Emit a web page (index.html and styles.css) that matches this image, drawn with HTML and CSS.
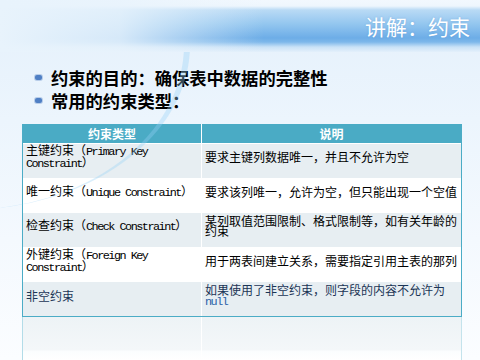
FILE: index.html
```html
<!DOCTYPE html>
<html lang="zh-CN">
<head>
<meta charset="utf-8">
<title>讲解：约束</title>
<link rel="stylesheet" href="styles.css">
</head>
<body>
<div class="slide">
  <div class="swoosh"></div>
  <header class="banner">
    <h1 class="title">讲解：约束</h1>
  </header>
  <ul class="points">
    <li>约束的目的：确保表中数据的完整性</li>
    <li>常用的约束类型：</li>
  </ul>
  <div class="table-wrap">
    <div class="grid">
      <div class="hd">约束类型</div>
      <div class="hd">说明</div>

      <div class="cell odd"><p>主键约束（<span class="en">Primary Key Constraint</span>）</p></div>
      <div class="cell odd"><p>要求主键列数据唯一，并且不允许为空</p></div>

      <div class="cell even"><p>唯一约束（<span class="en">Unique Constraint</span>）</p></div>
      <div class="cell even"><p>要求该列唯一，允许为空，但只能出现一个空值</p></div>

      <div class="cell odd"><p>检查约束（<span class="en">Check Constraint</span>）</p></div>
      <div class="cell odd"><p>某列取值范围限制、格式限制等，如有关年龄的约束</p></div>

      <div class="cell even"><p>外键约束（<span class="en">Foreign Key Constraint</span>）</p></div>
      <div class="cell even"><p>用于两表间建立关系，需要指定引用主表的那列</p></div>

      <div class="cell odd last"><p>非空约束</p></div>
      <div class="cell odd last"><p>如果使用了非空约束，则字段的内容不允许为<span class="en null">null</span></p></div>
    </div>
    <div class="reflection">
      <div class="rc"></div>
      <div class="rc"></div>
    </div>
  </div>
</div>
</body>
</html>
```

FILE: styles.css
```css
* { box-sizing: border-box; }

html, body {
  margin: 0;
  padding: 0;
}

body {
  width: 480px;
  height: 360px;
  overflow: hidden;
  font-family: "Noto Sans CJK SC", "Noto Sans", sans-serif;
  background: linear-gradient(180deg, #e4f0fb 0px, #ecf5fd 120px, #f4f9fe 240px, #fbfdff 360px);
}

.slide {
  position: relative;
  width: 480px;
  height: 360px;
}

.swoosh {
  position: absolute;
  left: -260px;
  top: -120px;
  width: 450px;
  height: 330px;
  border-radius: 50%;
  border-right: 6px solid rgba(150, 210, 245, 0.35);
  pointer-events: none;
}

.banner {
  position: relative;
  height: 52px;
  display: flex;
  align-items: center;
  justify-content: flex-end;
  padding-right: 10px;
  background:
    linear-gradient(90deg, rgba(232, 243, 252, 1) 0%, rgba(232, 243, 252, 0.85) 25%, rgba(232, 243, 252, 0) 55%),
    linear-gradient(180deg, #f2f8fe 0px, #eef6fd 6px, #b9daf5 10px, #93c6ef 24px, #6dade7 38px, #7db7ea 42px, #c9e2f7 47px, #e4f0fb 52px);
}

.title {
  margin: 0;
  font-size: 21px;
  font-weight: normal;
  line-height: 26px;
  color: #ffffff;
  text-shadow: 0 0 2px rgba(60, 120, 190, 0.35);
}

.points {
  list-style: none;
  margin: 0;
  padding: 14px 0 0 35px;
}

.points li {
  font-size: 17.3px;
  font-weight: bold;
  line-height: 23px;
  color: #000;
  display: flex;
  align-items: center;
}

.points li::before {
  content: "";
  display: inline-block;
  width: 7px;
  height: 5px;
  border-radius: 2px;
  margin-right: 9px;
  background: #4f7fc4;
  box-shadow: 0 0 0 1px #b8cde9;
}

.table-wrap {
  margin: 12px 0 0 22px;
  width: 440px;
}

.grid {
  display: grid;
  grid-template-columns: 178px 259px;
  grid-template-rows: 19px repeat(5, 33.6px);
  column-gap: 1px;
  row-gap: 1px;
  background: #ffffff;
  border-left: 1px solid #4bacc6;
  border-right: 1px solid #4bacc6;
  border-bottom: 1px solid #4bacc6;
}

.hd {
  background: #4aabc5;
  color: #ffffff;
  font-weight: bold;
  font-size: 12px;
  line-height: 19px;
  text-align: center;
}

.cell {
  display: flex;
  align-items: center;
  padding: 0 2px 7px 3px;
  font-size: 12px;
  color: #000;
}

.cell p {
  margin: 0;
  line-height: 10px;
}

.odd { background: #e7eef2; }
.even { background: #ffffff; }

.last { color: #1b3556; }

.en {
  font-family: "Liberation Mono", "DejaVu Sans Mono", monospace;
  font-size: 11.8px;
  letter-spacing: -1.5px;
}

.null { color: #2a62a8; }

.reflection {
  display: grid;
  grid-template-columns: 178px 259px;
  column-gap: 1px;
  height: 43px;
  background: #ffffff;
  border-left: 1px solid #b3dce8;
  border-right: 1px solid #c4e3ec;
}

.rc {
  background: linear-gradient(180deg, #edf3f6 0px, #f4f7f9 33px, #fbfdfe 34px, #ffffff 43px);
}
```
